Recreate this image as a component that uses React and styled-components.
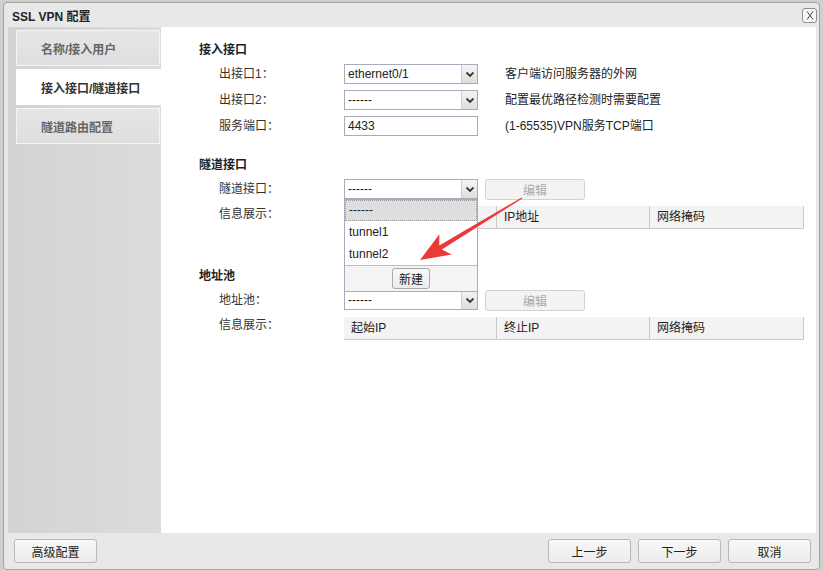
import React from 'react';
import styled, { createGlobalStyle } from 'styled-components';

const GlobalStyle = createGlobalStyle`
  html, body {
    margin: 0;
    padding: 0;
    background: #cfcfcf;
    font-family: "Liberation Sans", "Noto Sans CJK SC", sans-serif;
    font-size: 12px;
    color: #333;
  }
`;

const Dialog = styled.div`
  width: 817px;
  height: 568px;
  margin: 2px 0 0 3px;
  box-sizing: border-box;
  border: 1px solid #a3a3a3;
  border-radius: 4px;
  background: #e8e8e8;
  display: flex;
  flex-direction: column;
  overflow: hidden;
`;

const TitleBar = styled.div`
  height: 24px;
  display: flex;
  align-items: center;
  justify-content: space-between;
  padding: 0 2px 0 8px;
`;

const Title = styled.div`
  font-weight: bold;
  font-size: 12px;
  color: #222;
`;

const CloseButton = styled.div`
  width: 15px;
  height: 15px;
  box-sizing: border-box;
  border: 1px solid #8e8e8e;
  border-radius: 3px;
  background: #f7f7f7;
  display: flex;
  align-items: center;
  justify-content: center;
`;

const Body = styled.div`
  height: 506px;
  margin: 0 3px 0 4px;
  display: flex;
`;

const Sidebar = styled.div`
  width: 153px;
  box-sizing: border-box;
  padding: 3px 0 0 8px;
  background: linear-gradient(90deg, #d3d3d3, #dcdcdc);
  display: flex;
  flex-direction: column;
  gap: 3px;
`;

const Tab = styled.div`
  width: ${p => (p.$active ? '145px' : '144px')};
  height: 36px;
  box-sizing: border-box;
  border: 1px solid ${p => (p.$active ? '#fff' : '#f5f5f5')};
  border-right: ${p => (p.$active ? 'none' : '1px solid #f5f5f5')};
  background: ${p => (p.$active ? '#fff' : 'linear-gradient(#e6e6e6, #dedede)')};
  display: flex;
  align-items: center;
  padding-left: 24px;
  font-weight: bold;
  font-size: 12px;
  color: ${p => (p.$active ? '#333' : '#666')};
`;

const Content = styled.div`
  flex: 1;
  background: #fff;
  position: relative;
  box-sizing: border-box;
  padding: 15px 12px 0 38px;
  display: flex;
  flex-direction: column;
`;

const Section = styled.div`
  margin-top: ${p => p.$mt || 0}px;
  display: flex;
  flex-direction: column;
  gap: 6px;
`;

const SectionTitle = styled.div`
  height: 16px;
  line-height: 16px;
  font-weight: bold;
  color: #222;
`;

const Row = styled.div`
  display: flex;
  align-items: flex-start;
  padding-left: 20px;
`;

const Label = styled.div`
  width: 125px;
  flex: none;
  line-height: ${p => (p.$tall ? 16 : 20)}px;
  color: #333;
`;

const Field = styled.div`
  position: relative;
  width: 134px;
  height: 20px;
  box-sizing: border-box;
  border: 1px solid #a7abbb;
  background: #fff;
  display: flex;
  align-items: center;
  flex: none;
`;

const FieldValue = styled.span`
  flex: 1;
  padding-left: 3px;
  color: #222;
  white-space: nowrap;
`;

const Arrow = styled.span`
  width: 16px;
  height: 100%;
  box-sizing: border-box;
  border-left: 1px solid #cdd0da;
  background: linear-gradient(#f4f4f4, #dedede);
  display: flex;
  align-items: center;
  justify-content: center;
`;

const Hint = styled.div`
  margin-left: 27px;
  line-height: 20px;
  color: #222;
`;

const EditButton = styled.div`
  margin-left: 7px;
  width: 100px;
  height: 21px;
  box-sizing: border-box;
  border: 1px solid #d2d2d2;
  border-radius: 3px;
  background: #f3f3f3;
  color: #aaa;
  display: flex;
  align-items: center;
  justify-content: center;
`;

const Table = styled.div`
  width: 460px;
  height: 23px;
  box-sizing: border-box;
  background: #f3f3f3;
  border-bottom: 1px solid #c9c9c9;
  display: grid;
  grid-template-columns: 153px 153px 154px;
`;

const HeadCell = styled.div`
  border-right: 1px solid #c9c9c9;
  padding-left: 7px;
  line-height: 22px;
  color: #222;
`;

const Dropdown = styled.div`
  position: absolute;
  top: 19px;
  left: -1px;
  width: 134px;
  height: 93px;
  box-sizing: border-box;
  border: 1px solid #a7abbb;
  background: #fff;
  z-index: 2;
  display: flex;
  flex-direction: column;
`;

const Option = styled.div`
  height: 21px;
  flex: none;
  box-sizing: border-box;
  line-height: 19px;
  padding-left: 3px;
  border: 1px dotted ${p => (p.$active ? '#9a9a9a' : 'transparent')};
  background: ${p => (p.$active ? '#dedede' : '#fff')};
  color: #222;
  &:nth-child(2), &:nth-child(3) {
    height: 22px;
    line-height: 20px;
  }
`;

const DropFooter = styled.div`
  flex: 1;
  border-top: 1px solid #b9bccb;
  background: #f4f4f4;
  display: flex;
  justify-content: center;
  padding-top: 2px;
`;

const SmallButton = styled.div`
  width: 38px;
  height: 21px;
  box-sizing: border-box;
  border: 1px solid #aaa;
  border-radius: 3px;
  background: linear-gradient(#f9f9f9, #ececec);
  display: flex;
  align-items: center;
  justify-content: center;
  color: #222;
`;

const Footer = styled.div`
  flex: 1;
  display: flex;
  align-items: center;
  padding: 0 8px 0 10px;
  gap: 7px;
`;

const FooterButton = styled.div`
  width: 83px;
  height: 24px;
  box-sizing: border-box;
  border: 1px solid #b8b8b8;
  border-radius: 3px;
  background: linear-gradient(#f8f8f8, #ececec);
  display: flex;
  align-items: center;
  justify-content: center;
  color: #222;
  margin-left: ${p => (p.$push ? 'auto' : '0')};
`;

const Overlay = styled.svg`
  position: absolute;
  left: 0;
  top: 0;
  width: 100%;
  height: 100%;
  pointer-events: none;
  z-index: 3;
`;

const Chevron = () => (
  <svg width="8" height="5" viewBox="0 0 8 5">
    <path d="M0.5 0.5 L4 4 L7.5 0.5" fill="none" stroke="#333" strokeWidth="1.8" />
  </svg>
);

const Select = ({ value, children }) => (
  <Field>
    <FieldValue>{value}</FieldValue>
    <Arrow>
      <Chevron />
    </Arrow>
    {children}
  </Field>
);

const App = () => (
  <>
    <GlobalStyle />
    <Dialog>
      <TitleBar>
        <Title>SSL VPN 配置</Title>
        <CloseButton>
          <svg width="8" height="9" viewBox="0 0 8 9">
            <path d="M1 0.5 L7 8.5 M7 0.5 L1 8.5" stroke="#444" strokeWidth="1" />
          </svg>
        </CloseButton>
      </TitleBar>
      <Body>
        <Sidebar>
          <Tab>名称/接入用户</Tab>
          <Tab $active>接入接口/隧道接口</Tab>
          <Tab>隧道路由配置</Tab>
        </Sidebar>
        <Content>
          <Section>
            <SectionTitle>接入接口</SectionTitle>
            <Row>
              <Label>出接口1：</Label>
              <Select value="ethernet0/1" />
              <Hint>客户端访问服务器的外网</Hint>
            </Row>
            <Row>
              <Label>出接口2：</Label>
              <Select value="------" />
              <Hint>配置最优路径检测时需要配置</Hint>
            </Row>
            <Row>
              <Label>服务端口：</Label>
              <Field>
                <FieldValue>4433</FieldValue>
              </Field>
              <Hint>(1-65535)VPN服务TCP端口</Hint>
            </Row>
          </Section>

          <Section $mt={21}>
            <SectionTitle>隧道接口</SectionTitle>
            <Row>
              <Label>隧道接口：</Label>
              <Select value="------">
                <Dropdown>
                  <Option $active>------</Option>
                  <Option>tunnel1</Option>
                  <Option>tunnel2</Option>
                  <DropFooter>
                    <SmallButton>新建</SmallButton>
                  </DropFooter>
                </Dropdown>
              </Select>
              <EditButton>编辑</EditButton>
            </Row>
            <Row>
              <Label $tall>信息展示：</Label>
              <Table>
                <HeadCell />
                <HeadCell>IP地址</HeadCell>
                <HeadCell>网络掩码</HeadCell>
              </Table>
            </Row>
          </Section>

          <Section $mt={39}>
            <SectionTitle>地址池</SectionTitle>
            <Row>
              <Label>地址池：</Label>
              <Select value="------" />
              <EditButton>编辑</EditButton>
            </Row>
            <Row>
              <Label $tall>信息展示：</Label>
              <Table>
                <HeadCell>起始IP</HeadCell>
                <HeadCell>终止IP</HeadCell>
                <HeadCell>网络掩码</HeadCell>
              </Table>
            </Row>
          </Section>

          <Overlay>
            <polygon
              fill="#ee3838"
              points="361.3,171.5 280.8,222.6 290.8,227.6 259,233 278.4,207.2 278.2,218.4 360.7,170.5"
            />
          </Overlay>
        </Content>
      </Body>
      <Footer>
        <FooterButton>高级配置</FooterButton>
        <FooterButton $push>上一步</FooterButton>
        <FooterButton>下一步</FooterButton>
        <FooterButton>取消</FooterButton>
      </Footer>
    </Dialog>
  </>
);

export default App;
